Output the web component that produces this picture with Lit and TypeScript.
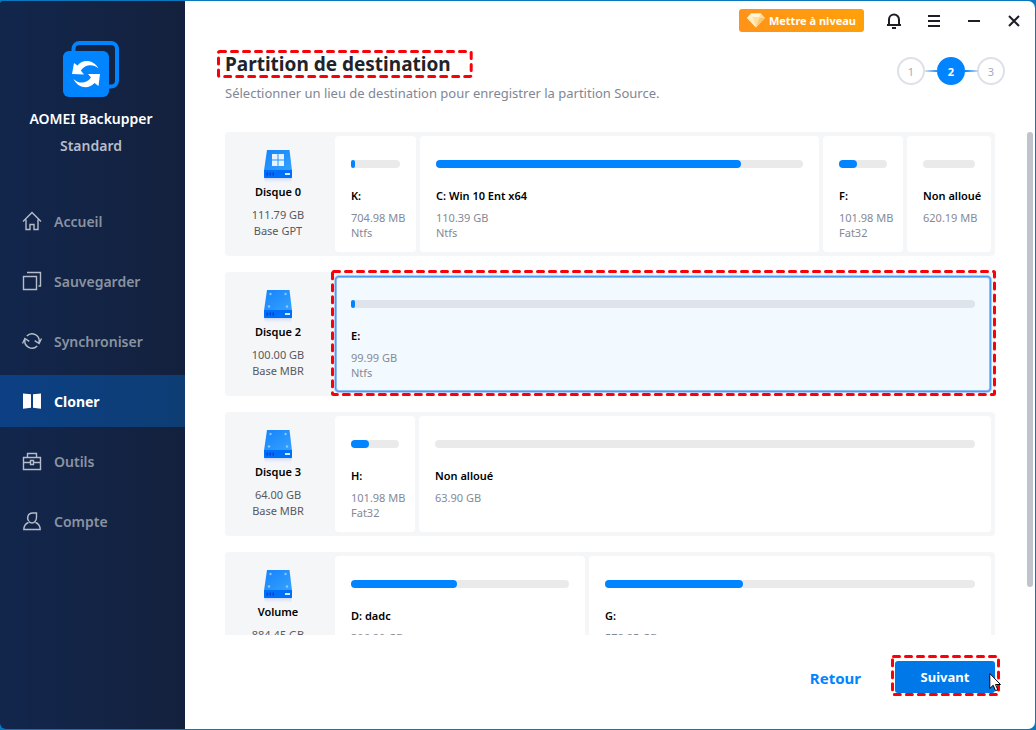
import { LitElement, html, svg, css, nothing } from "lit";
import { customElement, property } from "lit/decorators.js";
import { classMap } from "lit/directives/class-map.js";
import { styleMap } from "lit/directives/style-map.js";

interface Partition {
  name: string;
  size: string;
  fs?: string;
  weight: number;
  used: number;
  selected?: boolean;
}

interface Disk {
  name: string;
  size: string;
  base: string;
  system?: boolean;
  partitions: Partition[];
}

const DISKS: Disk[] = [
  {
    name: "Disque 0", size: "111.79 GB", base: "Base GPT", system: true,
    partitions: [
      { name: "K:", size: "704.98 MB", fs: "Ntfs", weight: 81, used: 8 },
      { name: "C: Win 10 Ent x64", size: "110.39 GB", fs: "Ntfs", weight: 399, used: 83 },
      { name: "F:", size: "101.98 MB", fs: "Fat32", weight: 80, used: 37 },
      { name: "Non alloué", size: "620.19 MB", weight: 84, used: 0 },
    ],
  },
  {
    name: "Disque 2", size: "100.00 GB", base: "Base MBR",
    partitions: [{ name: "E:", size: "99.99 GB", fs: "Ntfs", weight: 656, used: 0.5, selected: true }],
  },
  {
    name: "Disque 3", size: "64.00 GB", base: "Base MBR",
    partitions: [
      { name: "H:", size: "101.98 MB", fs: "Fat32", weight: 80, used: 37 },
      { name: "Non alloué", size: "63.90 GB", weight: 572, used: 0 },
    ],
  },
  {
    name: "Volume", size: "884.45 GB", base: "Base MBR",
    partitions: [
      { name: "D: dadc", size: "306.20 GB", fs: "Ntfs", weight: 250, used: 48.6 },
      { name: "G:", size: "578.25 GB", fs: "Ntfs", weight: 402, used: 37.3 },
    ],
  },
];

const NAV = [
  { label: "Accueil", icon: svg`<path d="M1 10.5 10 1.5l9 9M4 8.500v10h4v-5h4v5h4v-10"/>` },
  { label: "Sauvegarder", icon: svg`<path d="M1.500 5.500h13v13h-13zM5 1.500h13.500v13.500h-2"/>` },
  { label: "Synchroniser", icon: svg`<path d="M4.800 5A7.200 7.200 0 0 1 17 11.500M15.200 15A7.200 7.200 0 0 1 3 8.500M.500 12.500 2.900 7.500 7.300 10.300M19.500 7.500 17.100 12.500 12.700 9.700"/>` },
  { label: "Cloner", icon: svg`<path class="solid" d="M1 2.500l8 .8v13.400l-8 1zM19 2.500l-8 .8v13.400l8 1z"/>`, active: true },
  { label: "Outils", icon: svg`<path d="M1.500 6.500h17v12h-17zM5.500 6.500v-4h9v4M1.500 11.500h7M11.500 11.500h7M8.500 9.500h3v4h-3z"/>` },
  { label: "Compte", icon: svg`<path d="M7 10C4.500 8 5.500 2 10.500 2H14.500V6.500C14.500 9 13.500 10 13 10.500M7 10.500c1.500 2 4.500 2 6 0M6.500 11.500C3.500 12.500 2 15 1.800 18.500H18.200C18 15 16.500 12.500 13.500 11.500"/>` },
];

/** Dashed red outline that surrounds its nearest positioned ancestor. */
@customElement("dash-frame")
export class DashFrame extends LitElement {
  static styles = css`
    :host { position: absolute; pointer-events: none; }
    svg { display: block; width: 100%; height: 100%; }
    rect {
      x: 1.5px; y: 1.5px;
      width: calc(100% - 3px); height: calc(100% - 3px);
      fill: none; stroke: #fb0007; stroke-width: 3;
      stroke-linecap: round; stroke-dasharray: 6 6;
    }
  `;
  render() {
    return html`<svg aria-hidden="true"><rect rx="1"></rect></svg>`;
  }
}

@customElement("disk-icon")
export class DiskIcon extends LitElement {
  @property({ type: Boolean }) system = false;
  static styles = css`
    :host { display: block; height: 32px; }
    svg { display: block; }
  `;
  render() {
    return html`<svg width="34" height="36" viewBox="0 0 34 36" aria-hidden="true">
      <defs>
        <linearGradient id="top" x1="0" y1="0" x2="1" y2="1">
          <stop offset="0" stop-color="#1583fb"/><stop offset="1" stop-color="#35a2ff"/>
        </linearGradient>
        <linearGradient id="shade" x1="0" y1="0" x2="0" y2="1">
          <stop offset="0" stop-color="#bccdf6"/><stop offset="1" stop-color="#eef2fb" stop-opacity="0"/>
        </linearGradient>
      </defs>
      <path d="M3 27h28l-1 7H4z" fill="url(#shade)"/>
      <path d="M6 0h22.500L31 20.500H3z" fill="url(#top)"/>
      <path d="M3 20h28v7.200q0 .800-.800.800H3.800q-.800 0-.800-.800z" fill="#0070f8"/>
      <path d="M5.500 22.500h1.500v3H5.500zM8.500 22.500h1.500v3H8.500zM11.500 22.500H13v3h-1.500z" fill="#0040d8"/>
      <path d="M24 23h5v2h-5z" fill="#d8eaff"/>
      ${this.system
        ? svg`<path d="M11 4h5.500v5.500H11zM17.500 4H23v5.500h-5.500zM11 10.500h5.500V16H11zM17.500 10.500H23V16h-5.500z" fill="#e6f3ff"/>`
        : svg`<g fill="#8cc6ff"><circle cx="9.500" cy="4" r="1.200"/><circle cx="24.500" cy="4" r="1.200"/><circle cx="8" cy="16.500" r="1.200"/><circle cx="26" cy="16.500" r="1.200"/></g>`}
    </svg>`;
  }
}

@customElement("disk-row")
export class DiskRow extends LitElement {
  @property({ attribute: false }) disk!: Disk;
  static styles = css`
    :host {
      display: flex; flex: none; box-sizing: border-box; height: 124px;
      padding: 4px 4px 4px 0; background: #f5f6f8; border-radius: 4px;
    }
    .info {
      flex: none; width: 110px; padding-top: 14px; box-sizing: border-box;
      display: flex; flex-direction: column; align-items: center;
      font-size: 11px; line-height: 16px; color: #555960; padding-right: 4px;
    }
    .info strong { font-weight: 600; color: #000; line-height: 20px; margin-bottom: 5px; }
    .parts { flex: 1; min-width: 0; display: grid; gap: 4px; }
    .part {
      position: relative; min-width: 0; box-sizing: border-box; text-align: left;
      padding: 24px 16px 0; background: #fff; border: 0; border-radius: 4px;
      display: flex; flex-direction: column; justify-content: flex-start; align-items: flex-start;
      font: inherit; font-size: 11px; line-height: 15px; color: #858a96;
      white-space: nowrap;
    }
    .part.selected {
      background: #f2f9ff;
      box-shadow: inset 0 0 0 1px #4a9cf5, inset 0 0 0 2px #8cbcf8, 0 0 0 1px #b4cbf6;
    }
    .track { flex: none; align-self: stretch; height: 8px; border-radius: 4px; background: #eaeaea; }
    .selected .track { background: #dfe3ec; }
    .fill { height: 8px; min-width: 4px; border-radius: 4px; background: #0084ff; }
    .name { color: #000; font-weight: 600; line-height: 20px; margin: 18px 0 4px; }
    dash-frame { inset: -6px -5px -4px -4px; }
  `;
  render() {
    const d = this.disk;
    const columns = d.partitions.map((p) => `minmax(0, ${p.weight}fr)`).join(" ");
    return html`
      <div class="info">
        <disk-icon ?system=${!!d.system}></disk-icon>
        <strong>${d.name}</strong>
        <span>${d.size}</span>
        <span>${d.base}</span>
      </div>
      <div class="parts" style=${styleMap({ gridTemplateColumns: columns })}>
        ${d.partitions.map((p) => html`
          <button type="button"
            class=${classMap({ part: true, selected: !!p.selected })}
            aria-pressed=${p.selected ? "true" : "false"}>
            <div class="track">
              ${p.used ? html`<div class="fill" style=${styleMap({ width: `${p.used}%` })}></div>` : nothing}
            </div>
            <span class="name">${p.name}</span>
            <span>${p.size}</span>
            ${p.fs ? html`<span>${p.fs}</span>` : nothing}
            ${p.selected ? html`<dash-frame></dash-frame>` : nothing}
          </button>`)}
      </div>`;
  }
}

@customElement("side-bar")
export class SideBar extends LitElement {
  static styles = css`
    :host {
      flex: none; width: 185px; display: flex; flex-direction: column;
      background: linear-gradient(90deg, #12264c, #14213d);
      border-radius: 3px 0 0 6px;
    }
    .brand { display: flex; flex-direction: column; align-items: center; padding: 40px 3px 0 0; margin-bottom: 36px; }
    .brand svg { display: block; margin-bottom: 8px; }
    .brand b { font-size: 14px; line-height: 27px; font-weight: 600; color: #fff; }
    .brand .edition { color: #b7bdc9; }
    nav { display: flex; flex-direction: column; gap: 8px; }
    a {
      display: flex; align-items: center; gap: 12px; height: 52px; padding-left: 22px;
      color: #8a93a1; font-size: 14px; font-weight: 600; text-decoration: none;
    }
    a svg { flex: none; fill: none; stroke: #b6bdca; stroke-width: 1.4; }
    a.active { color: #fff; font-weight: 700; background: linear-gradient(90deg, #0c4084, #0e3d74); }
    .solid { fill: #fff; stroke: none; }
  `;
  render() {
    return html`
      <div class="brand">
        <svg width="56" height="56" viewBox="0 0 56 56" aria-hidden="true">
          <rect x="10.500" y="2" width="43.500" height="43.500" rx="6" fill="none" stroke="#0084ff" stroke-width="4"/>
          <rect x="0" y="10" width="46" height="46" rx="6" fill="#0084ff"/>
          <path d="M35.500 27.500C31 19 20 17.500 14.500 24.500L11 22 9 33 21 33.500 17.800 29.500C22 23.500 30 22.500 35.500 27.500z" fill="#fff"/>
          <path d="M10.500 38C15 47.500 26 48.500 31.500 42L35.500 45 37 33 25 33 28 36.500C24 42.500 16 43.500 10.500 38z" fill="#fff"/>
        </svg>
        <b>AOMEI Backupper</b>
        <b class="edition">Standard</b>
      </div>
      <nav>
        ${NAV.map((n) => html`
          <a href="#" class=${classMap({ active: !!n.active })}>
            <svg width="20" height="20" viewBox="0 0 20 20" aria-hidden="true">${n.icon}</svg>${n.label}
          </a>`)}
      </nav>`;
  }
}

@customElement("app-root")
export class AppRoot extends LitElement {
  static styles = css`
    :host {
      display: flex; box-sizing: border-box; height: 100vh;
      padding: 1px 1px 1px 0; background: #0a77bd;
      font-family: "Noto Sans", "Open Sans", sans-serif;
    }
    button { font-family: inherit; cursor: pointer; }
    main {
      flex: 1; min-width: 0; display: flex; flex-direction: column;
      background: #fff; border-radius: 0 7px 7px 0;
    }
    .titlebar { display: flex; justify-content: flex-end; align-items: center; height: 39px; padding-right: 1px; }
    .upgrade {
      display: flex; align-items: center; gap: 4px; height: 23px; padding: 0 8px; margin-right: 10px;
      border: 0; border-radius: 3px; background: linear-gradient(90deg, #ff9318, #ffa00a);
      color: #fff; font-size: 11px; font-weight: 700; white-space: nowrap;
    }
    .tool {
      display: grid; place-items: center; width: 40px; height: 39px; padding: 0;
      border: 0; background: none; color: #1e1e28;
    }
    .tool svg { fill: none; stroke: currentColor; stroke-width: 2; }
    .head { display: flex; justify-content: space-between; padding: 10px 30px 0 40px; height: 92px; box-sizing: border-box; }
    h1 {
      position: relative; width: fit-content; margin: 0; color: #1f242b;
      font-size: 19px; font-weight: 700; line-height: 28px;
    }
    h1 dash-frame { inset: 0 -22px 0 -8px; }
    .head p { margin: 5px 0 0; font-size: 13px; line-height: 20px; color: #808694; }
    ol { display: flex; align-items: center; height: 28px; margin: 7px 0 0; padding: 0; list-style: none; }
    li {
      display: grid; place-items: center; box-sizing: border-box; width: 28px; height: 28px;
      border: 2px solid #dde1e8; border-radius: 50%; color: #a2abba; font-size: 11px;
    }
    li + li { position: relative; margin-left: 12px; }
    li + li::before {
      content: ""; position: absolute; right: 100%; top: 11px; width: 14px; height: 2px;
      background: linear-gradient(90deg, #0084ff, #dde1e8);
    }
    li.current::before { background: linear-gradient(90deg, #dde1e8, #0084ff); }
    li.current { background: #0084ff; border-color: #0084ff; color: #fff; font-weight: 700; }
    .body { flex: 1; min-height: 0; display: flex; padding: 0 2px 0 40px; }
    .list { flex: 1; min-width: 0; display: flex; flex-direction: column; gap: 16px; overflow: hidden; margin-right: 28px; padding-right: 4px; }
    .rail { flex: none; width: 6px; }
    .thumb { height: 455px; border-radius: 3px; background: #bfc4cc; }
    footer { flex: none; display: flex; justify-content: flex-end; gap: 34px; height: 94px; padding: 26px 40px 0; box-sizing: border-box; }
    .back { height: 34px; padding: 0; border: 0; background: none; color: #0084ff; font-size: 15px; font-weight: 700; }
    .next {
      position: relative; width: 100px; height: 32px; padding: 0; border: 0; border-radius: 3px;
      background: #0078e7; color: #fff; font-size: 13px; font-weight: 700;
    }
    .next dash-frame { inset: -6px -5px -3px -4px; }
    .cursor { position: absolute; left: 94px; top: 11px; }
  `;
  render() {
    return html`
      <side-bar></side-bar>
      <main>
        <div class="titlebar">
          <button class="upgrade" type="button">
            <svg width="18" height="15" viewBox="0 0 18 15" aria-hidden="true">
              <path d="M4 0.500h10L18 5 9 14.500 0 5z" fill="#ffdf9e"/>
              <path d="M4 .500h10L12 4H6z" fill="#fff6dd"/>
              <path d="M0 5 4 .500 6 4.500 9 14.500z" fill="#fff0c8"/>
              <path d="M18 5 12.500 5 9 14.500z" fill="#ffc46a"/>
            </svg>
            Mettre à niveau
          </button>
          <button class="tool" type="button" aria-label="Notifications">
            <svg width="16" height="16" viewBox="0 0 16 16"><path d="M3 12V6.500A5 5 0 0 1 13 6.500V12M1 12h14M6 15h4"/></svg>
          </button>
          <button class="tool" type="button" aria-label="Menu">
            <svg width="14" height="14" viewBox="0 0 14 14"><path d="M1 2h12M1 7h12M1 12h12"/></svg>
          </button>
          <button class="tool" type="button" aria-label="Réduire">
            <svg width="14" height="14" viewBox="0 0 14 14"><path d="M1 7h12"/></svg>
          </button>
          <button class="tool" type="button" aria-label="Fermer">
            <svg width="14" height="14" viewBox="0 0 14 14"><path d="M2 2l10 10M12 2L2 12"/></svg>
          </button>
        </div>
        <div class="head">
          <div>
            <h1>Partition de destination<dash-frame></dash-frame></h1>
            <p>Sélectionner un lieu de destination pour enregistrer la partition Source.</p>
          </div>
          <ol><li>1</li><li class="current">2</li><li>3</li></ol>
        </div>
        <div class="body">
          <div class="list">${DISKS.map((d) => html`<disk-row .disk=${d}></disk-row>`)}</div>
          <div class="rail"><div class="thumb"></div></div>
        </div>
        <footer>
          <button class="back" type="button">Retour</button>
          <button class="next" type="button">Suivant
            <dash-frame></dash-frame>
            <svg class="cursor" width="13" height="20" viewBox="0 0 13 20" aria-hidden="true">
              <path d="M.800 1.500v15l3.400-3.200 2.300 5.400 2.300-1-2.300-5.200h5z" fill="#fff" stroke="#000"/>
            </svg>
          </button>
        </footer>
      </main>`;
  }
}
